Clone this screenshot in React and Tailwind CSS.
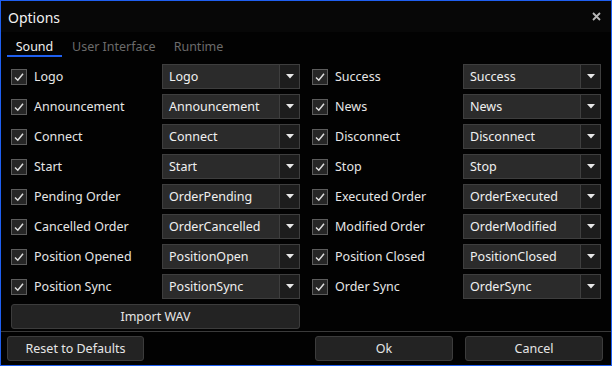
import React from 'react';

const rows = [
  ['Logo', 'Logo', 'Success', 'Success'],
  ['Announcement', 'Announcement', 'News', 'News'],
  ['Connect', 'Connect', 'Disconnect', 'Disconnect'],
  ['Start', 'Start', 'Stop', 'Stop'],
  ['Pending Order', 'OrderPending', 'Executed Order', 'OrderExecuted'],
  ['Cancelled Order', 'OrderCancelled', 'Modified Order', 'OrderModified'],
  ['Position Opened', 'PositionOpen', 'Position Closed', 'PositionClosed'],
  ['Position Sync', 'PositionSync', 'Order Sync', 'OrderSync'],
];

const Check = () => (
  <div className="w-[16px] h-[16px] shrink-0 border border-[#5c5c5c] bg-[#262626] flex items-center justify-center">
    <svg width="12" height="12" viewBox="0 0 12 12">
      <polyline points="2,6.5 4.8,9.2 10,2.8" fill="none" stroke="#e0e0e0" strokeWidth="1.5" />
    </svg>
  </div>
);

const Select = ({ value }) => (
  <div className="w-[138px] h-[25px] shrink-0 flex border border-[#3e3e3e] bg-[#2b2b2b]">
    <div className="flex-1 flex items-center pl-[6px] pt-[2px] text-[#f0f0f0]">{value}</div>
    <div className="w-[20px] border-l border-[#3e3e3e] bg-[#1d1d1d] flex items-center justify-center">
      <svg width="8" height="5" viewBox="0 0 8 5">
        <polygon points="0,0 8,0 4,4.5" fill="#e8e8e8" />
      </svg>
    </div>
  </div>
);

const Item = ({ label, value }) => (
  <div className="flex items-center h-[25px]">
    <Check />
    <span className="flex-1 ml-[7px] pt-[2px] text-[#e6e6e6]">{label}</span>
    <Select value={value} />
  </div>
);

const Button = ({ children, className }) => (
  <button className={`h-[25px] rounded-[3px] border border-[#3c3c3c] bg-[#232323] text-[#e6e6e6] pt-[2px] ${className}`}>
    {children}
  </button>
);

export default function App() {
  return (
    <div
      className="w-[612px] h-[366px] border border-[#1f5ff0] bg-[#020202] flex flex-col text-[12.5px] leading-none"
      style={{ fontFamily: '"Noto Sans", "Open Sans", sans-serif' }}
    >
      <div className="h-[31px] flex items-center justify-between pl-[7px] pr-[10px] bg-[#070707]">
        <span className="text-[14px] text-[#f2f2f2] pt-[2px]">Options</span>
        <svg width="9" height="9" viewBox="0 0 9 9">
          <path d="M1 1 L8 8 M8 1 L1 8" stroke="#b8b8b8" strokeWidth="1.8" />
        </svg>
      </div>

      <div className="flex h-[25px] pl-[6px]">
        <div className="w-[55px] flex items-end justify-center pb-[2px] border-b-2 border-[#1f5ff0] text-[#f0f0f0]">Sound</div>
        <div className="flex items-end pb-[2px] pl-[10px] border-b-2 border-transparent text-[#6b6b6b]">User Interface</div>
        <div className="flex items-end pb-[2px] pl-[18px] border-b-2 border-transparent text-[#6b6b6b]">Runtime</div>
      </div>

      <div className="mt-[7px] px-[10px] grid grid-cols-[289px_289px] gap-x-[12px] gap-y-[5px]">
        {rows.map((r) => (
          <React.Fragment key={r[0]}>
            <Item label={r[0]} value={r[1]} />
            <Item label={r[2]} value={r[3]} />
          </React.Fragment>
        ))}
        <Button className="w-[289px]">Import WAV</Button>
      </div>

      <div className="mt-[2px] h-px bg-[#3a3a3a]" />

      <div className="mt-[4px] flex pl-[6px]">
        <Button className="w-[137px]">Reset to Defaults</Button>
        <Button className="w-[138px] ml-[171px]">Ok</Button>
        <Button className="w-[138px] ml-[12px]">Cancel</Button>
      </div>
    </div>
  );
}
